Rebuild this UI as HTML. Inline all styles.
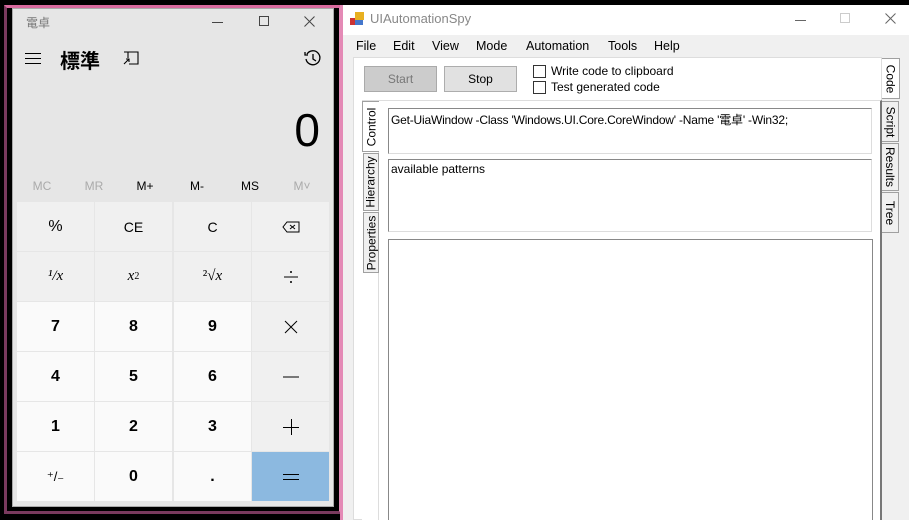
<!DOCTYPE html>
<html style="overflow:hidden;width:909px;height:520px"><head><meta charset="utf-8"><style>
*{margin:0;padding:0;box-sizing:border-box}
body{width:909px;height:520px;background:#000;position:relative;overflow:hidden;font-family:"Segoe UI","Liberation Sans","Noto Sans CJK JP",sans-serif}
.a{position:absolute}
.c{display:flex;align-items:center;justify-content:center}
.k{position:absolute;width:77px;height:49px;display:flex;align-items:center;justify-content:center;font-size:15px;color:#000}
.f{background:#f0f0f0}.n{background:#fafafa;font-weight:bold;font-size:16px}
.m{position:absolute;top:179px;font-size:12px;width:40px;text-align:center}
.ms{font-family:"Liberation Sans","Noto Sans CJK JP",sans-serif;font-size:12px;color:#000}
.vt{position:absolute;background:#f0f0f0;border:1px solid #a0a0a0;display:flex;align-items:center;justify-content:center}
.vt span{transform:rotate(90deg);white-space:nowrap;font-size:12px;font-family:"Liberation Sans",sans-serif}
.vl span{transform:rotate(-90deg)}
</style></head><body>
<div class="a" style="left:4px;top:5px;width:338px;height:509px;border:3px solid #7a3a5e;border-right-color:#e48ab6;border-top-color:#d86a9e"></div>
<div class="a" style="left:12px;top:8px;width:322px;height:499px;background:#e6e6e6;border:1px solid #aaa"></div>
<div class="a" style="left:26px;top:14px;font-size:12px;color:#777">電卓</div>
<div class="a" style="left:212px;top:22px;width:11px;height:1px;background:#444"></div>
<div class="a" style="left:259px;top:16px;width:10px;height:10px;border:1px solid #444"></div>
<svg class="a" style="left:304px;top:16px" width="11" height="11"><path d="M0.5 0.5l10 10M10.5 0.5l-10 10" stroke="#444" stroke-width="1"/></svg>
<div class="a" style="left:25px;top:53px;width:16px;height:11px;border-top:1px solid #000;border-bottom:1px solid #000"><div style="margin-top:4px;height:1px;background:#000"></div></div>
<div class="a" style="left:60px;top:45px;font-size:20px;font-weight:bold">標準</div>
<svg class="a" style="left:123px;top:51px" width="16" height="14" viewBox="0 0 16 14"><path d="M1 1h14v12H6M5 1v6M1 13l5-5M3 8h3v3" fill="none" stroke="#000" stroke-width="1.1"/></svg>
<svg class="a" style="left:304px;top:49px" width="18" height="18" viewBox="0 0 18 18"><path d="M3 5A7 7 0 1 1 2 10M1 3v3h3M9 5v5l3 2" fill="none" stroke="#000" stroke-width="1.3"/></svg>
<div class="a" style="right:589px;top:102px;font-size:46px;line-height:56px;font-family:'Liberation Sans',sans-serif">0</div>
<div class="m" style="left:22px;color:#aaa">MC</div><div class="m" style="left:74px;color:#aaa">MR</div>
<div class="m" style="left:125px">M+</div><div class="m" style="left:177px">M-</div>
<div class="m" style="left:230px">MS</div><div class="m" style="left:282px;color:#aaa">M˅</div>
<div class="a" style="left:16px;top:201px;width:314px;height:302px;background:#e6e6e6"></div>
<div class="k f" style="left:17px;top:202px;font-size:16px">%</div><div class="k f" style="left:95px;top:202px;font-size:14px">CE</div><div class="k f" style="left:174px;top:202px;font-size:14px">C</div>
<div class="k f" style="left:252px;top:202px"><svg width="18" height="12"><path d="M5 1h12v10H5L1 6z" fill="none" stroke="#000"/><path d="M8 4l5 4M13 4l-5 4" stroke="#000"/></svg></div>
<div class="k f" style="left:17px;top:252px;font-family:'Liberation Serif'"><i>¹/x</i></div><div class="k f" style="left:95px;top:252px;font-family:'Liberation Serif'"><i>x</i><sup style="font-size:10px">2</sup></div><div class="k f" style="left:174px;top:252px;font-family:'Liberation Serif'">²√<i>x</i></div>
<div class="k f" style="left:252px;top:252px"><svg width="16" height="14"><path d="M1 7h14" stroke="#000"/><circle cx="8" cy="2" r="1"/><circle cx="8" cy="12" r="1"/></svg></div>
<div class="k n" style="left:17px;top:302px">7</div><div class="k n" style="left:95px;top:302px">8</div><div class="k n" style="left:174px;top:302px">9</div>
<div class="k f" style="left:252px;top:302px"><svg width="14" height="14"><path d="M1 1l12 12M13 1L1 13" stroke="#000"/></svg></div>
<div class="k n" style="left:17px;top:352px">4</div><div class="k n" style="left:95px;top:352px">5</div><div class="k n" style="left:174px;top:352px">6</div>
<div class="k f" style="left:252px;top:352px"><svg width="16" height="4"><path d="M0 2h16" stroke="#000"/></svg></div>
<div class="k n" style="left:17px;top:402px">1</div><div class="k n" style="left:95px;top:402px">2</div><div class="k n" style="left:174px;top:402px">3</div>
<div class="k f" style="left:252px;top:402px"><svg width="16" height="16"><path d="M0 8.5h16M8.5 0v16" stroke="#000"/></svg></div>
<div class="k n" style="left:17px;top:452px;font-weight:normal;font-size:13px">⁺/₋</div><div class="k n" style="left:95px;top:452px">0</div><div class="k n" style="left:174px;top:452px">.</div>
<div class="k" style="left:252px;top:452px;background:#8cb9e0"><svg width="16" height="8"><path d="M0 1.5h16M0 6.5h16" stroke="#000"/></svg></div>
<div class="a" style="left:340px;top:5px;width:3px;height:515px;background:#e48ab6"></div>
<div class="a" style="left:343px;top:5px;width:566px;height:515px;background:#f0f0f0"></div>
<div class="a" style="left:343px;top:5px;width:566px;height:30px;background:#fff"></div>
<svg class="a" style="left:350px;top:12px" width="14" height="14"><rect x="0" y="6" width="6" height="7" fill="#c33"/><rect x="5" y="0" width="9" height="8" fill="#e8b020"/><rect x="5" y="8" width="8" height="5" fill="#47c"/></svg>
<div class="a ms" style="left:370px;top:11px;font-size:13px;color:#888">UIAutomationSpy</div>
<div class="a" style="left:795px;top:20px;width:11px;height:1px;background:#666"></div>
<div class="a" style="left:840px;top:13px;width:10px;height:10px;border:1px solid #ccc"></div>
<svg class="a" style="left:885px;top:13px" width="11" height="11"><path d="M0.5 0.5l10 10M10.5 0.5l-10 10" stroke="#666" stroke-width="1"/></svg>
<div class="a ms" style="left:356px;top:39px;font-size:12.5px">File</div>
<div class="a ms" style="left:393px;top:39px;font-size:12.5px">Edit</div>
<div class="a ms" style="left:432px;top:39px;font-size:12.5px">View</div>
<div class="a ms" style="left:476px;top:39px;font-size:12.5px">Mode</div>
<div class="a ms" style="left:526px;top:39px;font-size:12.5px">Automation</div>
<div class="a ms" style="left:608px;top:39px;font-size:12.5px">Tools</div>
<div class="a ms" style="left:654px;top:39px;font-size:12.5px">Help</div>
<div class="a" style="left:353px;top:57px;width:529px;height:463px;background:#fff;border:1px solid #ddd"></div>
<div class="a c ms" style="left:364px;top:66px;width:73px;height:26px;background:#ccc;border:1px solid #aaa;color:#777">Start</div>
<div class="a c ms" style="left:444px;top:66px;width:73px;height:26px;background:#e1e1e1;border:1px solid #adadad">Stop</div>
<div class="a" style="left:533px;top:65px;width:13px;height:13px;border:1px solid #333;background:#fff"></div>
<div class="a ms" style="left:551px;top:64px">Write code to clipboard</div>
<div class="a" style="left:533px;top:81px;width:13px;height:13px;border:1px solid #333;background:#fff"></div>
<div class="a ms" style="left:551px;top:80px">Test generated code</div>
<div class="vt" style="left:882px;top:58px;width:18px;height:41px;background:#fff;border-left:none"><span>Code</span></div>
<div class="vt" style="left:881px;top:101px;width:18px;height:41px"><span>Script</span></div>
<div class="vt" style="left:881px;top:143px;width:18px;height:48px"><span>Results</span></div>
<div class="vt" style="left:881px;top:192px;width:18px;height:41px"><span>Tree</span></div>
<div class="a" style="left:362px;top:100px;width:520px;height:420px;background:#fff;border-top:1px solid #ddd;border-right:2px solid #777"></div>
<div class="a" style="left:378px;top:100px;width:3px;height:420px;border-left:1px solid #ddd"></div>
<div class="vt vl" style="left:362px;top:101px;width:17px;height:51px;background:#fff;border-right:none"><span>Control</span></div>
<div class="vt vl" style="left:363px;top:153px;width:16px;height:58px"><span>Hierarchy</span></div>
<div class="vt vl" style="left:363px;top:212px;width:16px;height:61px"><span>Properties</span></div>
<div class="a" style="left:388px;top:108px;width:484px;height:46px;border:1px solid #888;border-right-color:#ddd;border-bottom-color:#ddd;background:#fff"></div>
<div class="a ms" style="left:391px;top:111px;letter-spacing:-.2px">Get-UiaWindow -Class 'Windows.UI.Core.CoreWindow' -Name '電卓' -Win32;</div>
<div class="a" style="left:388px;top:159px;width:484px;height:73px;border:1px solid #888;border-right-color:#ddd;border-bottom-color:#ddd;background:#fff"></div>
<div class="a ms" style="left:391px;top:162px">available patterns</div>
<div class="a" style="left:388px;top:239px;width:485px;height:285px;border:1px solid #888;background:#fff"></div>
</body></html>
